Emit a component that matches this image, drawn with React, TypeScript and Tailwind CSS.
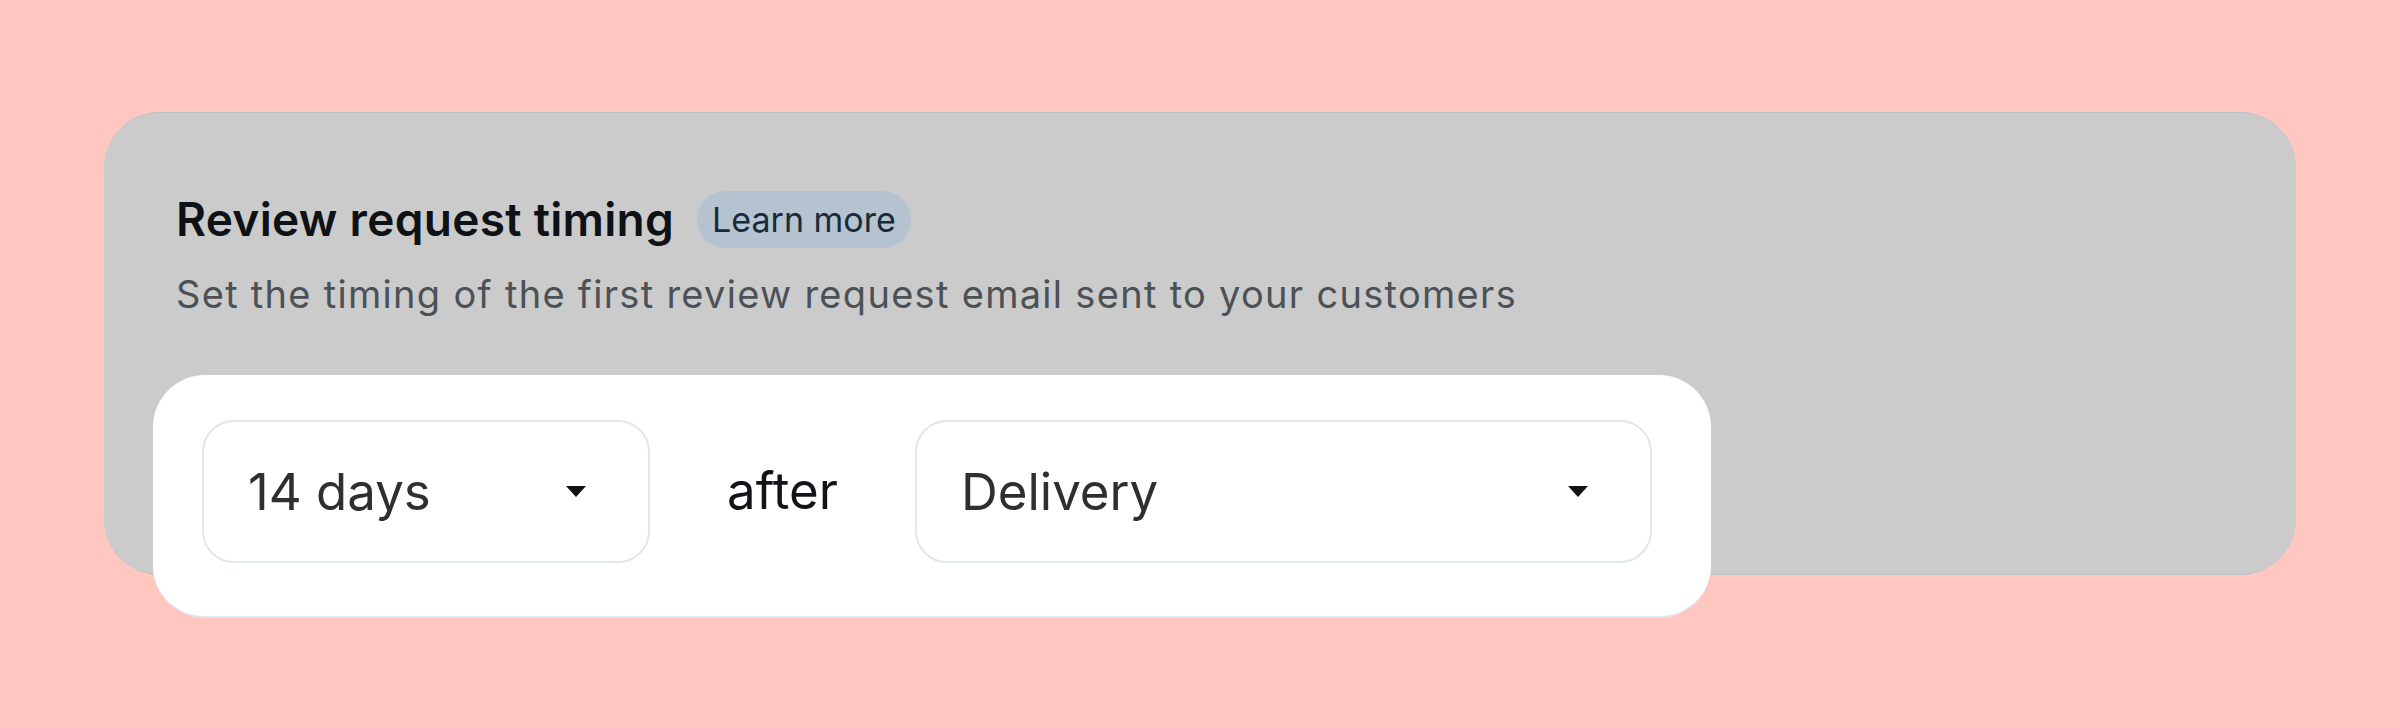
function Caret() {
  return (
    <svg width="20" height="11" viewBox="0 0 20 11" className="shrink-0">
      <path d="M0 0 H20 L10 11 Z" fill="#0f1316" />
    </svg>
  )
}

function SelectBox({ value, width }: { value: string; width: string }) {
  return (
    <div
      className={`flex h-[143px] ${width} items-center justify-between rounded-[32px] border-2 border-[#e1e6eb] bg-white pl-[44px] pr-[62px]`}
    >
      <span className="text-[51px] leading-none text-[#2f2f2f]">{value}</span>
      <Caret />
    </div>
  )
}

export default function App() {
  return (
    <div className="h-[728px] w-[2400px] bg-[#ffc7c0] pt-[112px] pl-[104px] font-['Inter',sans-serif]">
      <div className="h-[463px] w-[2192px] rounded-[56px] border-y border-[#b6c2cc] bg-[#cbcbcb] pt-[78px] pl-[72px]">
        <div className="flex items-center gap-[23px]">
          <div className="text-[46px] font-semibold leading-[57px] tracking-[0.3px] text-[#0e1216]">
            Review request timing
          </div>
          <div className="flex h-[57px] items-center rounded-full bg-[#b5c2cf] px-[15px] text-[34px] text-[#1a2a3b]">
            Learn more
          </div>
        </div>
        <div className="mt-[23px] text-[38px] leading-[46px] tracking-[1.3px] text-[#4b5157]">
          Set the timing of the first review request email sent to your customers
        </div>

        <div className="-ml-[23px] mt-[58px] flex h-[243px] w-[1558px] items-start gap-[77px] rounded-[52px] border-b-2 border-[#dce7f2] bg-white pt-[45px] pl-[49px]">
          <SelectBox value="14 days" width="w-[448px]" />
          <div className="flex h-[143px] items-center text-[51px] text-[#111418]">after</div>
          <SelectBox value="Delivery" width="w-[737px]" />
        </div>
      </div>
    </div>
  )
}
